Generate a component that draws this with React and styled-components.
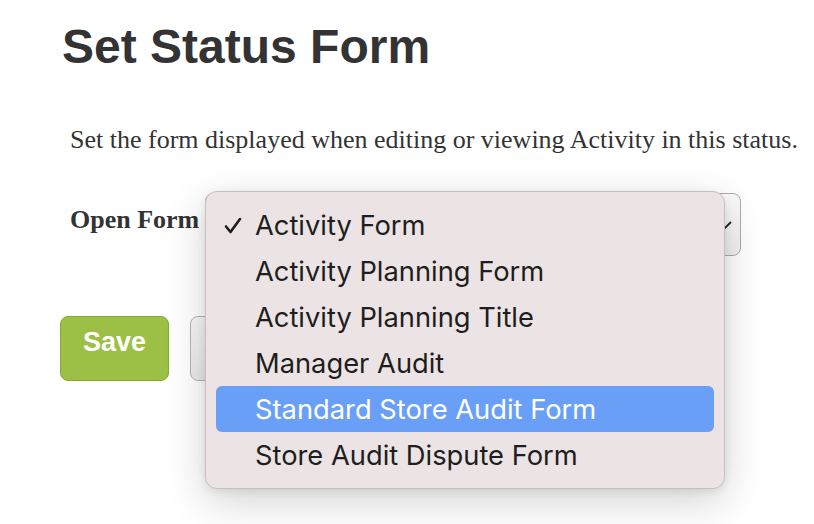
import styled, { createGlobalStyle } from "styled-components";

const Global = createGlobalStyle`
  body {
    margin: 0;
    background: #ffffff;
  }
`;

const Page = styled.div`
  padding: 19px 0 0 62px;
  width: 814px;
  height: 524px;
  box-sizing: border-box;
  overflow: hidden;
`;

const Title = styled.h1`
  margin: 0;
  font-family: "Liberation Sans", Arial, sans-serif;
  font-size: 48px;
  font-weight: bold;
  color: #333333;
`;

const Intro = styled.p`
  margin: 51px 0 0 8px;
  font-family: "Liberation Serif", "Times New Roman", serif;
  font-size: 26px;
  color: #333333;
  white-space: nowrap;
`;

const FieldRow = styled.div`
  display: flex;
  align-items: flex-start;
  margin: 38px 0 0 8px;
`;

const Label = styled.label`
  font-family: "Liberation Serif", "Times New Roman", serif;
  font-size: 26px;
  font-weight: bold;
  color: #333333;
  margin-top: 12px;
  width: 135px;
`;

const SelectWrap = styled.div`
  position: relative;
`;

const SelectBox = styled.div`
  width: 536px;
  height: 63px;
  box-sizing: border-box;
  border: 1.5px solid #adadad;
  border-radius: 8px;
  background: linear-gradient(#fbfbfb, #f1f1f1);
  display: flex;
  align-items: center;
  justify-content: flex-end;
  padding-right: 8px;
`;

const Menu = styled.ul`
  position: absolute;
  left: 0;
  top: -2px;
  width: 520px;
  margin: 0;
  padding: 10px 10px 10px;
  box-sizing: border-box;
  list-style: none;
  background: #ece4e4;
  border: 1px solid #c4c0c0;
  border-radius: 12px;
  box-shadow: 0 12px 40px rgba(0, 0, 0, 0.18), 0 2px 8px rgba(0, 0, 0, 0.08);
  z-index: 2;
`;

const Item = styled.li`
  position: relative;
  height: 46px;
  display: flex;
  align-items: center;
  padding-left: 39px;
  border-radius: 6px;
  font-family: Inter, "Noto Sans", sans-serif;
  font-size: 27.3px;
  color: ${(p) => (p.$active ? "#ffffff" : "#1e1e1e")};
  background: ${(p) => (p.$active ? "#6a9ff8" : "transparent")};
`;

const Check = styled.svg`
  position: absolute;
  left: 8px;
  top: 15px;
`;

const Buttons = styled.div`
  display: flex;
  gap: 21px;
  margin: 60px 0 0 -2px;
`;

const SaveButton = styled.button`
  width: 109px;
  height: 65px;
  padding: 0 0 13px;
  border: 1.5px solid #86aa3a;
  border-radius: 8px;
  background: #9bc045;
  color: #ffffff;
  font-family: "Liberation Sans", Arial, sans-serif;
  font-size: 27px;
  font-weight: bold;
`;

const CancelButton = styled.button`
  width: 120px;
  height: 65px;
  border: 1.5px solid #b3b3b3;
  border-radius: 8px;
  background: linear-gradient(#f7f7f7, #e9e9e9);
  font-family: "Liberation Sans", Arial, sans-serif;
  font-size: 27px;
`;

const options = [
  "Activity Form",
  "Activity Planning Form",
  "Activity Planning Title",
  "Manager Audit",
  "Standard Store Audit Form",
  "Store Audit Dispute Form",
];

export default function App() {
  const selected = "Activity Form";
  const hover = "Standard Store Audit Form";
  return (
    <Page>
      <Global />
      <Title>Set Status Form</Title>
      <Intro>Set the form displayed when editing or viewing Activity in this status.</Intro>
      <FieldRow>
        <Label>Open Form</Label>
        <SelectWrap>
          <SelectBox>
            <svg width="14" height="10" viewBox="0 0 14 10">
              <path d="M1 2 L7 8 L13 2" fill="none" stroke="#222" strokeWidth="1.8" />
            </svg>
          </SelectBox>
          <Menu>
            {options.map((o) => (
              <Item key={o} $active={o === hover}>
                {o === selected && (
                  <Check width="18" height="18" viewBox="0 0 18 18">
                    <path d="M2 9.5 L6.5 15 L16 2" fill="none" stroke="#1e1e1e" strokeWidth="2.6" strokeLinecap="round" strokeLinejoin="round" />
                  </Check>
                )}
                {o}
              </Item>
            ))}
          </Menu>
        </SelectWrap>
      </FieldRow>
      <Buttons>
        <SaveButton>Save</SaveButton>
        <CancelButton>Cancel</CancelButton>
      </Buttons>
    </Page>
  );
}
